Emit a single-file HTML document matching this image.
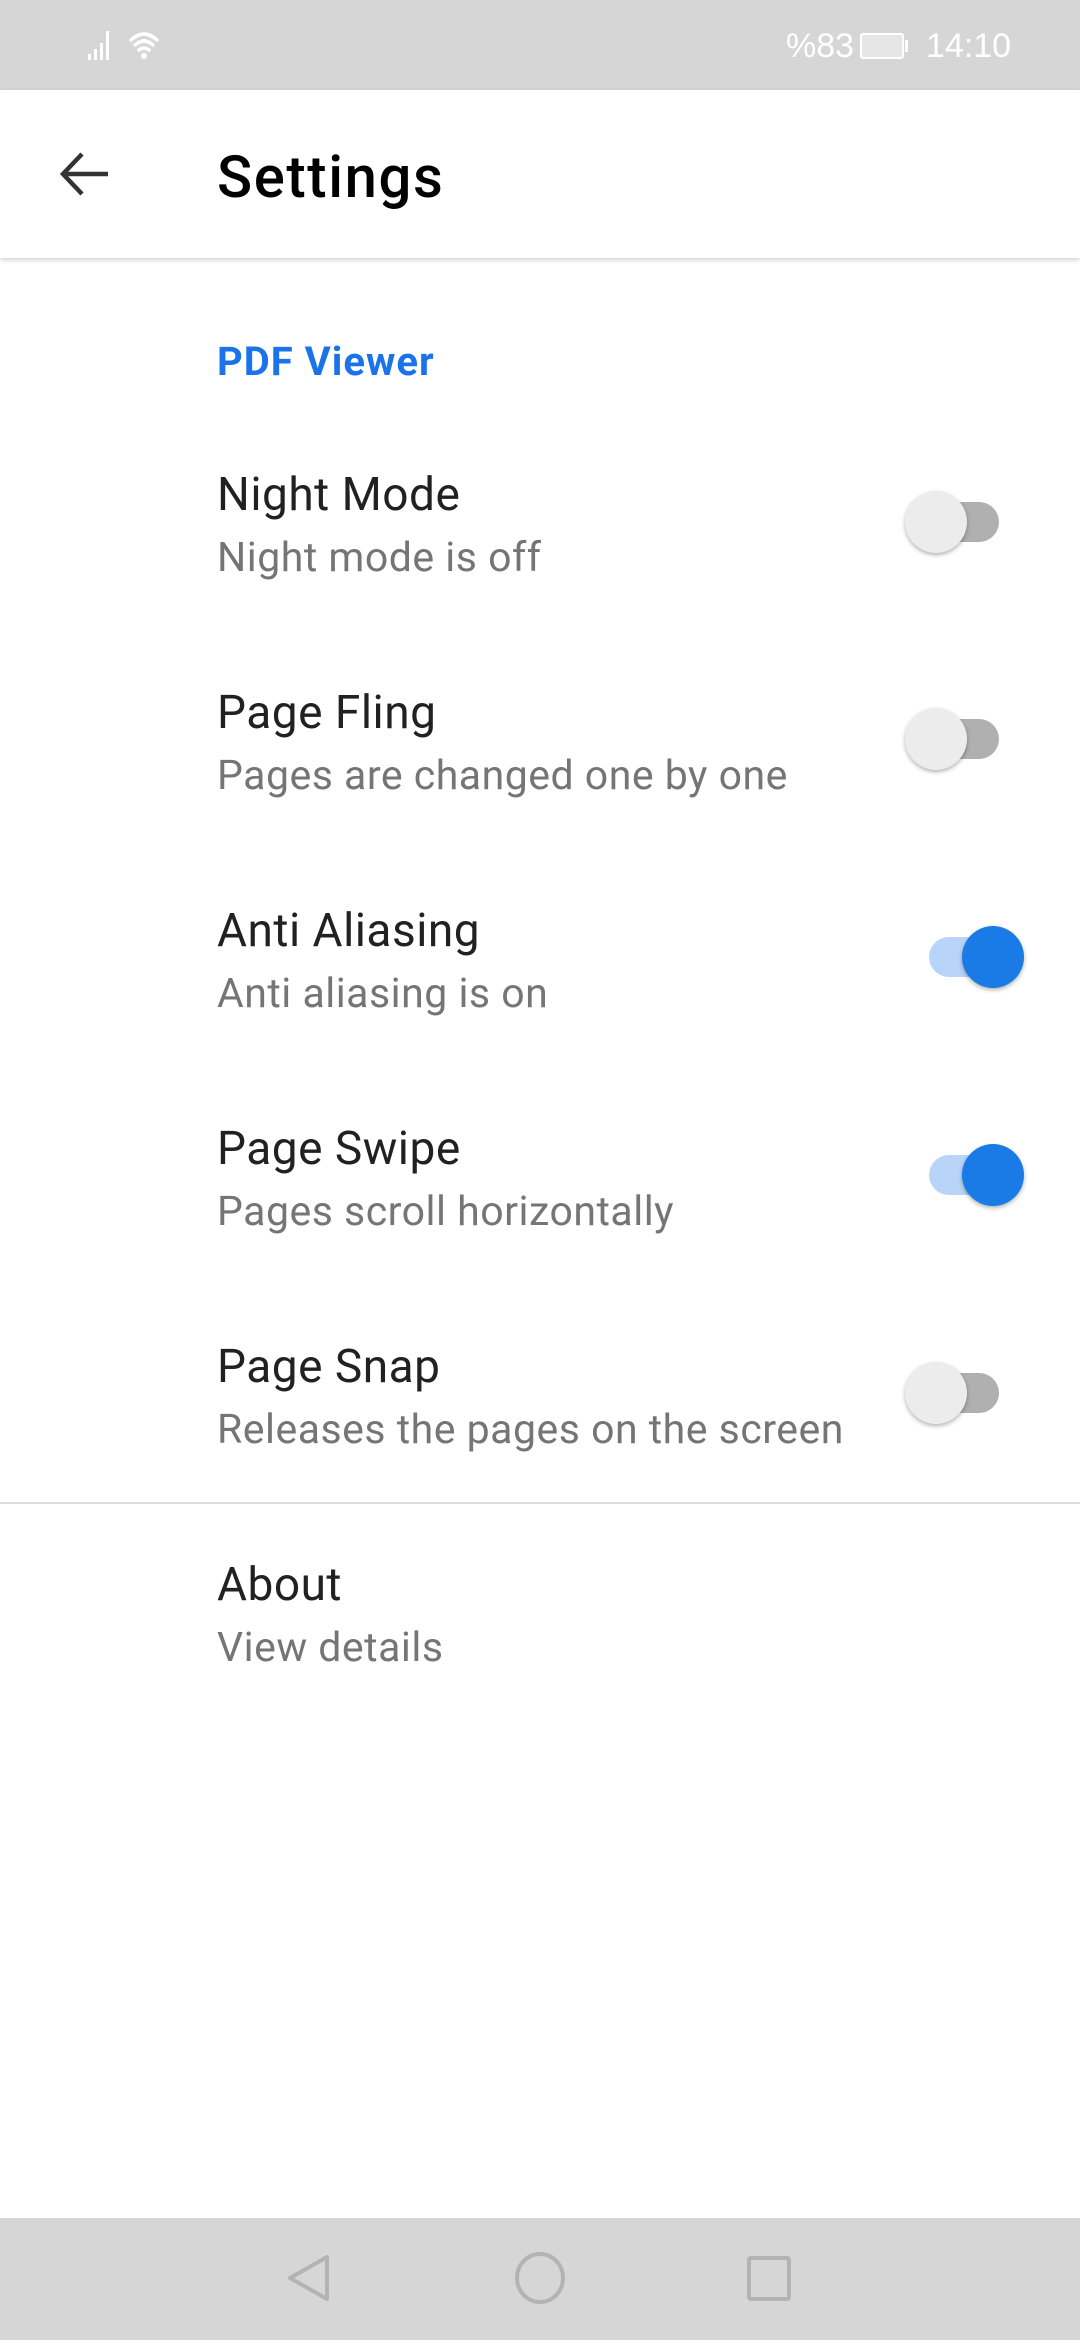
<!DOCTYPE html>
<html><head><meta charset="utf-8"><style>
*{margin:0;padding:0;box-sizing:border-box}
body{width:1080px;height:2340px;position:relative;background:#fff;font-family:"Roboto","Liberation Sans",sans-serif;overflow:hidden}
.sb{position:absolute;left:0;top:0;width:1080px;height:90px;background:#d6d6d6}
.ab{position:absolute;left:0;top:90px;width:1080px;height:168px;background:#fff;box-shadow:0 2px 5px rgba(0,0,0,0.18)}
.t{position:absolute;left:217px;white-space:nowrap}
.ti{font-size:46px;letter-spacing:0.5px;color:#212121;line-height:1}
.su{font-size:41px;letter-spacing:0.5px;color:#757575;line-height:1}
.tr{position:absolute;width:70px;height:40px;border-radius:20px;left:929px}
.th{position:absolute;width:62px;height:62px;border-radius:50%;box-shadow:0 2px 4px rgba(0,0,0,0.3)}
.nav{position:absolute;left:0;top:2218px;width:1080px;height:122px;background:#d6d6d6}
</style></head><body>
<div class="sb">
<svg style="position:absolute;left:86px;top:28px" width="84" height="34" viewBox="0 0 84 34">
<g fill="#fff"><rect x="2" y="26" width="3" height="6"/><rect x="8" y="21" width="3" height="11"/><rect x="14" y="15" width="3" height="17"/><rect x="20" y="3" width="3" height="29"/></g>
<g fill="none" stroke="#fff" stroke-width="3.5" stroke-linecap="round"><path d="M45 12 Q58 0 71 12"/><path d="M49 17 Q58 9 67 17"/><path d="M53 22 Q58 18 63 22"/></g>
<circle cx="58" cy="28" r="3" fill="#fff"/>
</svg>
<div style="position:absolute;left:786px;top:27px;font-size:34px;color:#fff;font-family:'Liberation Sans Narrow','Liberation Sans',sans-serif">%83</div>
<div style="position:absolute;left:860px;top:33px;width:44px;height:26px;border:2px solid #fff;border-radius:3px;background:#e6e6e6"></div>
<div style="position:absolute;left:905px;top:40px;width:3px;height:12px;background:#fff"></div>
<div style="position:absolute;left:926px;top:27px;font-size:34px;color:#fff;font-family:'Liberation Sans Narrow','Liberation Sans',sans-serif">14:10</div>
</div>
<div class="ab">
<svg style="position:absolute;left:58px;top:58px" width="52" height="52" viewBox="0 0 52 52"><path d="M50 26H6M24 6L5 26l19 20" fill="none" stroke="#333" stroke-width="4.5"/></svg>
<div style="position:absolute;left:217px;top:59px;font-size:58px;letter-spacing:1.6px;color:#000;font-weight:500;line-height:1">Settings</div>
</div>
<div class="t" style="top:342px;font-size:40px;letter-spacing:1px;font-weight:bold;color:#1a73e8;line-height:1">PDF Viewer</div>

<div class="t ti" style="top:472px">Night Mode</div>
<div class="t su" style="top:538px">Night mode is off</div>
<div class="tr" style="top:502px;background:#b0b0b0"></div><div class="th" style="left:905px;top:491px;background:#ececec"></div>

<div class="t ti" style="top:690px">Page Fling</div>
<div class="t su" style="top:756px">Pages are changed one by one</div>
<div class="tr" style="top:719px;background:#b0b0b0"></div><div class="th" style="left:905px;top:708px;background:#ececec"></div>

<div class="t ti" style="top:908px">Anti Aliasing</div>
<div class="t su" style="top:974px">Anti aliasing is on</div>
<div class="tr" style="top:937px;background:#b8d4f8"></div><div class="th" style="left:962px;top:926px;background:#1a7ae6"></div>

<div class="t ti" style="top:1126px">Page Swipe</div>
<div class="t su" style="top:1192px">Pages scroll horizontally</div>
<div class="tr" style="top:1155px;background:#b8d4f8"></div><div class="th" style="left:962px;top:1144px;background:#1a7ae6"></div>

<div class="t ti" style="top:1344px">Page Snap</div>
<div class="t su" style="top:1410px">Releases the pages on the screen</div>
<div class="tr" style="top:1373px;background:#b0b0b0"></div><div class="th" style="left:905px;top:1362px;background:#ececec"></div>

<div style="position:absolute;left:0;top:1502px;width:1080px;height:2px;background:#dcdcdc"></div>
<div class="t ti" style="top:1562px">About</div>
<div class="t su" style="top:1628px">View details</div>

<div class="nav">
<svg width="1080" height="122" viewBox="0 0 1080 122">
<g fill="none" stroke="#b3b3b3" stroke-width="4" stroke-linejoin="round">
<path d="M327 39 L290 60 L327 81 Z"/>
<ellipse cx="540" cy="60" rx="23" ry="24"/>
<rect x="749" y="40" width="40" height="41" rx="2"/>
</g></svg>
</div>
</body></html>
